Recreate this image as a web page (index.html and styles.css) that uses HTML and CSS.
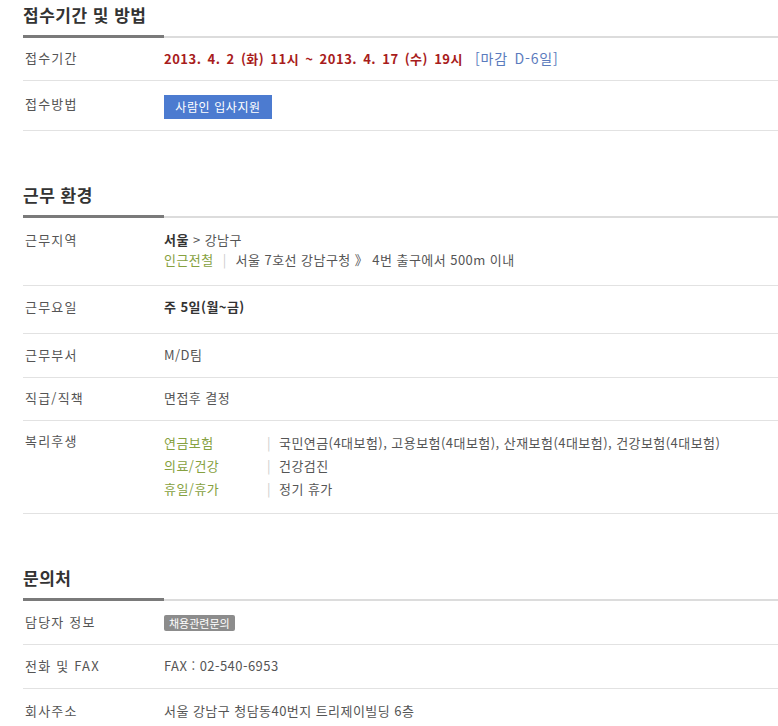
FILE: index.html
```html
<!DOCTYPE html>
<html lang="ko">
<head>
<meta charset="utf-8">
<title>채용정보</title>
<link rel="stylesheet" href="styles.css">
</head>
<body>
<div class="page">
  <section class="sec sec-first">
    <h2 class="sec-title">접수기간 및 방법</h2>
    <div class="rule"><span class="rule-dark"></span><span class="rule-light"></span></div>
    <div class="row row-period">
      <div class="label">접수기간</div>
      <div class="value"><span class="date">2013. 4. 2 (화) 11시 ~ 2013. 4. 17 (수) 19시</span><span class="dday">[마감 D-6일]</span></div>
    </div>
    <div class="row row-method">
      <div class="label">접수방법</div>
      <div class="value"><span class="apply-btn">사람인 입사지원</span></div>
    </div>
  </section>

  <section class="sec">
    <h2 class="sec-title">근무 환경</h2>
    <div class="rule"><span class="rule-dark"></span><span class="rule-light"></span></div>
    <div class="row row-area">
      <div class="label">근무지역</div>
      <div class="value">
        <div class="area"><b>서울</b> &gt; 강남구</div>
        <div class="subway"><span class="green">인근전철</span><span class="sep">|</span><span>서울 7호선 강남구청 》 4번 출구에서 500m 이내</span></div>
      </div>
    </div>
    <div class="row row-days">
      <div class="label">근무요일</div>
      <div class="value strong">주 5일(월~금)</div>
    </div>
    <div class="row">
      <div class="label">근무부서</div>
      <div class="value">M/D팀</div>
    </div>
    <div class="row row-rank">
      <div class="label">직급/직책</div>
      <div class="value">면접후 결정</div>
    </div>
    <div class="row row-welfare">
      <div class="label">복리후생</div>
      <div class="value welfare">
        <div class="wf"><span class="green wf-name">연금보험</span><span class="sep wf-sep">|</span><span>국민연금(4대보험), 고용보험(4대보험), 산재보험(4대보험), 건강보험(4대보험)</span></div>
        <div class="wf"><span class="green wf-name">의료/건강</span><span class="sep wf-sep">|</span><span>건강검진</span></div>
        <div class="wf"><span class="green wf-name">휴일/휴가</span><span class="sep wf-sep">|</span><span>정기 휴가</span></div>
      </div>
    </div>
  </section>

  <section class="sec">
    <h2 class="sec-title">문의처</h2>
    <div class="rule"><span class="rule-dark"></span><span class="rule-light"></span></div>
    <div class="row">
      <div class="label">담당자 정보</div>
      <div class="value"><span class="badge">채용관련문의</span></div>
    </div>
    <div class="row">
      <div class="label">전화 및 FAX</div>
      <div class="value">FAX : 02-540-6953</div>
    </div>
    <div class="row row-last">
      <div class="label">회사주소</div>
      <div class="value">서울 강남구 청담동40번지 트리제이빌딩 6층</div>
    </div>
  </section>
</div>
</body>
</html>
```

FILE: styles.css
```css
html, body {
  margin: 0;
  padding: 0;
  background: #fff;
}

body {
  font-family: "Noto Sans CJK KR", "Noto Sans", sans-serif;
  font-size: 13px;
  color: #555;
}

.page {
  padding-left: 23px;
}

.sec {
  margin-top: 49px;
}

.sec-first {
  margin-top: 0;
}

.sec-title {
  margin: 0;
  padding: 3px 0 8px;
  font-size: 17px;
  line-height: 24px;
  font-weight: bold;
  color: #333;
  letter-spacing: 0.5px;
}

.rule {
  display: flex;
  align-items: flex-end;
  height: 3px;
}

.rule-dark {
  flex: 0 0 141px;
  height: 3px;
  background: #7a7a7a;
}

.rule-light {
  flex: 1 1 auto;
  height: 2px;
  background: #dcdcdc;
}

.row {
  display: grid;
  grid-template-columns: 141px 1fr;
  padding: 11px 0 12px;
  line-height: 20px;
  border-bottom: 1px solid #e2e2e2;
}

.row-last {
  border-bottom: 0;
  padding-top: 12px;
}

.label {
  padding-left: 2px;
  color: #555;
  letter-spacing: 1.2px;
}

.value {
  color: #555;
  letter-spacing: 0.45px;
}

.row-period {
  padding: 10px 0 11px;
}

.date {
  color: #a81c1c;
  font-weight: bold;
  word-spacing: 2px;
  letter-spacing: 0.5px;
}

.dday {
  color: #5b7bbd;
  margin-left: 12px;
  font-size: 14px;
  word-spacing: 2px;
  letter-spacing: 0.8px;
}

.row-method {
  padding: 13px 0 11px;
}

.apply-btn {
  display: inline-block;
  margin-top: 1px;
  width: 108px;
  height: 24px;
  line-height: 24px;
  text-align: center;
  background: #4c7bd0;
  color: #fff;
  font-size: 12px;
  letter-spacing: 0.6px;
}

.row-area {
  padding: 12px 0 15px;
}

.area b {
  color: #333;
}

.green {
  color: #86a140;
}

.sep {
  color: #ccc;
  margin: 0 9px;
}

.row-days {
  padding: 11px 0 16px;
}

.strong {
  color: #333;
  font-weight: bold;
}

.row-rank {
  padding: 10px 0 12px;
}

.row-welfare {
  padding: 10px 0 13px;
}

.welfare .wf {
  display: flex;
  line-height: 23px;
}

.wf-name {
  flex: 0 0 103px;
}

.wf-sep {
  margin: 0 8px 0 0;
}

.badge {
  display: inline-block;
  padding: 0 5px;
  height: 16px;
  line-height: 16px;
  font-size: 11px;
  color: #fff;
  background: #8c8c8c;
  border-radius: 2px;
  vertical-align: middle;
  letter-spacing: 0;
}
```
